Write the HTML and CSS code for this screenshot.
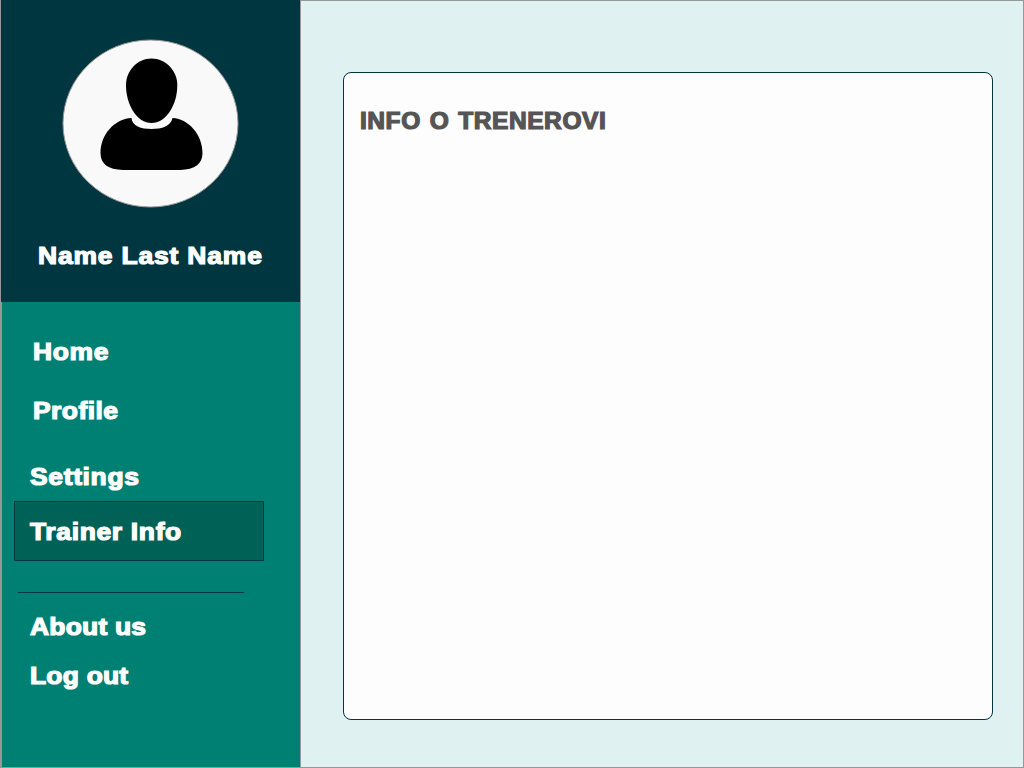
FILE: index.html
```html
<!DOCTYPE html>
<html lang="en">
<head>
<meta charset="utf-8">
<title>Trainer Info</title>
<link rel="stylesheet" href="styles.css">
</head>
<body>
<div class="app">
  <aside class="sidebar">
    <header class="user">
      <svg class="avatar" width="178" height="170" viewBox="0 0 178 170" aria-hidden="true">
        <ellipse cx="89.5" cy="84.5" rx="87.5" ry="83.5" fill="#f9f9f9" stroke="#979797"/>
        <path d="M90.500 19.500C105 19.500 116.300 32 116.300 46C116.300 66 105 84 90.500 84C76 84 65 66 65 46C65 32 76 19.500 90.500 19.500Z"/>
        <path d="M70.500 79C53 80 39.500 96 39.500 114C39.500 125 47 130.500 62 131H119C134 130.500 141.500 125 141.500 114C141.500 96 128 80 111.500 79C110 87 101 90 90.500 90C80 90 71 87 70.500 79Z"/>
      </svg>
      <div class="name"><span class="label">Name Last Name</span></div>
    </header>
    <nav class="menu">
      <a class="item home"><span class="label">Home</span></a>
      <a class="item profile"><span class="label">Profile</span></a>
      <a class="item settings"><span class="label">Settings</span></a>
      <a class="item trainer"><span class="label">Trainer Info</span></a>
      <hr class="divider">
      <a class="item about"><span class="label">About us</span></a>
      <a class="item logout"><span class="label">Log out</span></a>
    </nav>
  </aside>
  <main class="content">
    <section class="card"><h1 class="title"><span class="label">INFO O TRENEROVI</span></h1></section>
  </main>
</div>
</body>
</html>
```
FILE: styles.css
```css
* { box-sizing: border-box; }
body { margin: 0; font: bold 23.5px/28px "Arial Black", "Liberation Sans", sans-serif; }
.app { display: flex; width: 1024px; height: 768px; overflow: hidden; background: #e0f1f1; border: 1px solid #979797; border-top: 0; }
.sidebar { width: 300px; flex: none; border-right: 1px solid #979797; color: #fff; display: flex; flex-direction: column; }
.user { height: 302px; background: #00363f; padding: 39px 0 0 37px; }
.avatar { display: block; margin-left: 23px; }
.label { display: inline-block; letter-spacing: 0.6px; transform: scaleX(1.124); transform-origin: left; -webkit-text-stroke: 1.2px currentColor; }
.name { margin-top: 33px; white-space: nowrap; }
.name .label { letter-spacing: 0.75px; }
.menu { flex: 1; display: flex; flex-direction: column; background: #008073; border-left: 1px solid #979797; }
.item { height: 29px; padding: 1px 0 0 28px; white-space: nowrap; }
.home { margin-top: 35px; padding-left: 31px; }
.profile { margin-top: 30px; padding-left: 31px; }
.profile .label { letter-spacing: 0.4px; }
.settings { margin-top: 37px; }
.trainer { width: 250px; height: 60px; margin: 10px 0 0 12px; padding: 16px 0 0 15px; background: #006157; border: 1px solid #00363f; }
.divider { width: 226px; height: 1px; margin: 31px 0 0 16px; border: 0; background: #00363f; }
.about { margin-top: 19px; }
.logout { margin-top: 20px; }
.about .label, .logout .label { letter-spacing: 0.2px; }
.content { flex: 1; padding: 71px 30px 47px 42px; border-top: 1px solid #979797; }
.card { height: 648px; border: 1px solid #00363f; border-radius: 8px; background: #fdfdfd; padding: 34px 16px; }
.title { margin: 0; font-size: 23px; line-height: 28px; color: #555; white-space: nowrap; }
.title .label { letter-spacing: 0.5px; word-spacing: 1.5px; transform: scaleX(1.067); }
```
